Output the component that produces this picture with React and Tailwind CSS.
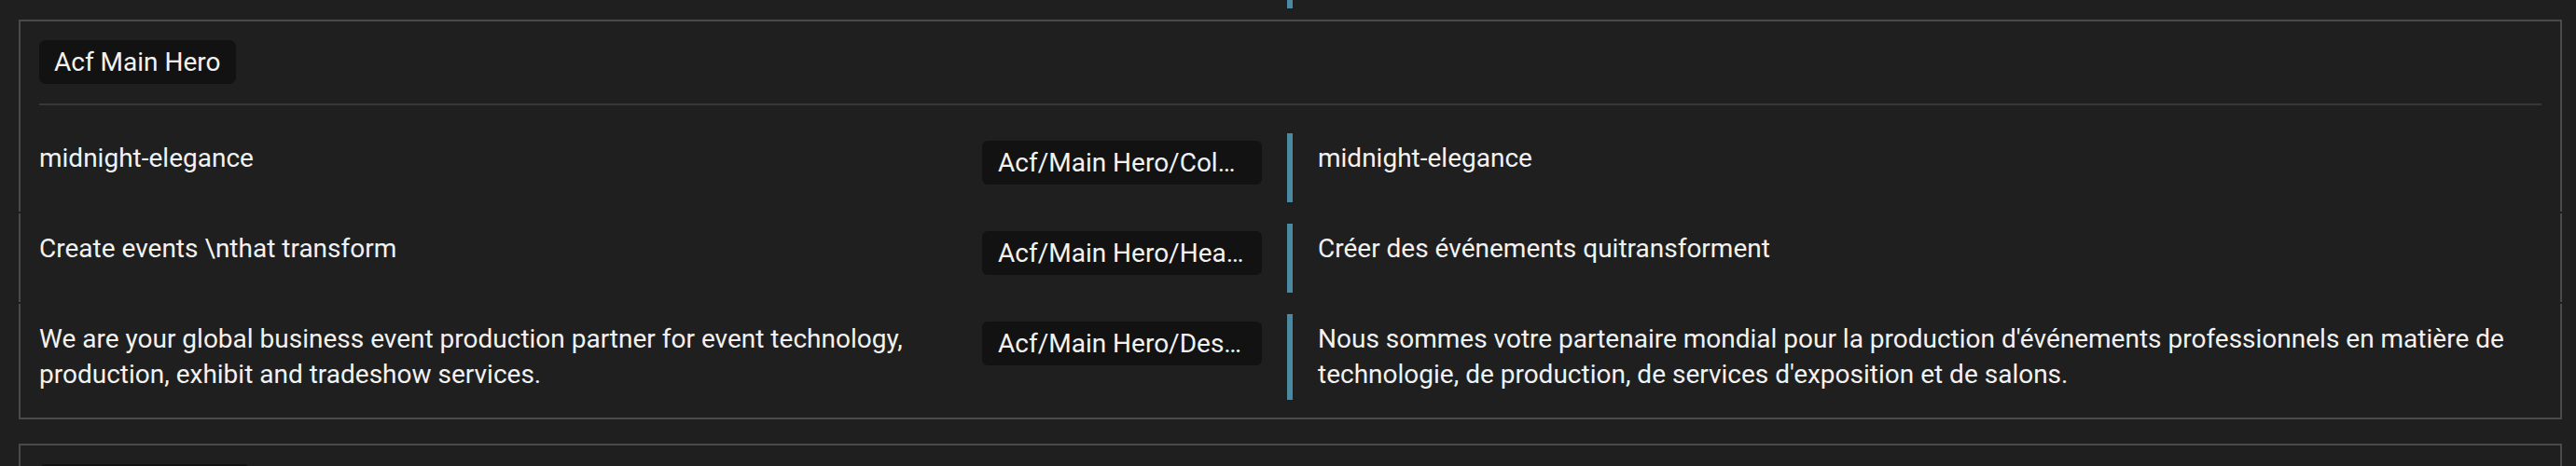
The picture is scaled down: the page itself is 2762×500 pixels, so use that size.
import React from 'react';

const rows = [
  {
    id: 'color',
    source: 'midnight-elegance',
    field: 'Acf/Main Hero/Color Scheme',
    target: 'midnight-elegance',
  },
  {
    id: 'headline',
    source: 'Create events \\nthat transform',
    field: 'Acf/Main Hero/Headline',
    target: 'Créer des événements quitransforment',
  },
  {
    id: 'description',
    source:
      'We are your global business event production partner for event technology, production, exhibit and tradeshow services.',
    field: 'Acf/Main Hero/Description',
    target:
      "Nous sommes votre partenaire mondial pour la production d'événements professionnels en matière de technologie, de production, de services d'exposition et de salons.",
  },
];

const TranslationRow = ({ row }) => (
  <div className="flex items-start px-[20px]">
    {/* Source text */}
    <div className="w-[984px] shrink-0 pt-[8px]">{row.source}</div>

    {/* Field key */}
    <div className="ml-[27px] w-[300px] shrink-0 pt-[8px]">
      <div className="h-[47px] truncate rounded-[6px] bg-[#121212] px-[17px] py-[4.5px]" title={row.field}>
        {row.field}
      </div>
    </div>

    {/* Translated text */}
    <div className="ml-[27px] min-h-[74px] flex-1 border-l-[6px] border-[#4a8aa1] py-[8px] pl-[27px]">
      {row.target}
    </div>
  </div>
);

const App = () => {
  return (
    <div
      className="min-h-[500px] bg-[#1f1f1f] text-[28px] leading-[38px] text-[#f2f2f2]"
      style={{ fontFamily: 'Roboto, "Noto Sans", sans-serif' }}
    >
      {/* tail of the previous group */}
      <div className="h-[9px]">
        <div className="ml-[1380px] h-full w-[6px] bg-[#4a8aa1]" />
      </div>

      {/* Acf Main Hero group */}
      <div className="mt-[12px] mb-[26px] ml-[20px] mr-[15px] flex flex-col gap-[2px]">
        <div className="border-x-2 border-t-2 border-[#4a4a4a] pt-[20px] pb-[10px]">
          <div className="px-[20px]">
            <div className="flex">
              <div className="h-[47px] rounded-[7px] bg-[#121212] px-[16px] py-[4.5px]">Acf Main Hero</div>
            </div>
            <div className="mt-[21px] h-[2px] bg-[#373737]" />
          </div>
          <div className="mt-[30px]">
            <TranslationRow row={rows[0]} />
          </div>
        </div>

        <div className="border-x-2 border-[#4a4a4a] pt-[11px] pb-[10px]">
          <TranslationRow row={rows[1]} />
        </div>

        <div className="border-x-2 border-b-2 border-[#4a4a4a] pt-[11px] pb-[19px]">
          <TranslationRow row={rows[2]} />
        </div>
      </div>

      {/* next group, cut off by the viewport */}
      <div className="ml-[20px] mr-[15px] border-x-2 border-t-2 border-[#4a4a4a] px-[20px] pt-[20px]">
        <div className="h-[47px] w-[226px] rounded-[7px] bg-[#121212]" />
      </div>
    </div>
  );
};

export default App;
